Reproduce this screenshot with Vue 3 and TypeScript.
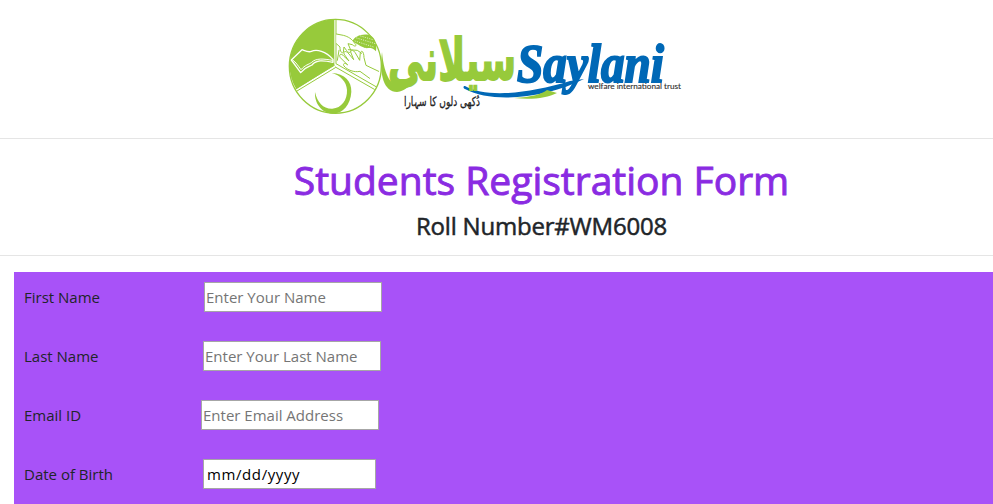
<script setup lang="ts">
interface Field {
  id: string
  label: string
  hint: string
}

const fields: Field[] = [
  { id: 'first-name', label: 'First Name', hint: 'Enter Your Name' },
  { id: 'last-name', label: 'Last Name', hint: 'Enter Your Last Name' },
  { id: 'email', label: 'Email ID', hint: 'Enter Email Address' },
  { id: 'birth-date', label: 'Date of Birth', hint: 'mm/dd/yyyy' },
]
</script>

<template>
  <div class="page">
    <header class="brand">
      <svg class="logo" width="410" height="110" viewBox="280 10 410 110" role="img" aria-label="Saylani">
        <!-- Emblem: book, hands with grain, crescent -->
        <g transform="translate(280 10) scale(.33333)" stroke-linejoin="round" stroke-linecap="round">
          <circle cx="166" cy="168" r="138" fill="#fff" />
          <path d="M163 166V28A138 138 0 0 0 49 238Z" fill="#97ca3b" />
          <ellipse cx="166" cy="169" rx="138" ry="141" fill="none" stroke="#97ca3b" stroke-width="4" />
          <path d="M168 28V161L288 230M166 173L51 243M163 166L47 236M166 171L283 238" fill="none" stroke="#97ca3b" stroke-width="3" />
          <path d="M34 150L66 119C79 124 86 128 94 124C110 117 137 123 159 148V157C127 150 109 150 96 165C87 170 76 170 62 188Z" fill="none" stroke="#fff" stroke-width="4" />
          <path d="M38 150C49 158 53 166 63 179C76 164 86 164 95 157C108 144 130 146 157 151" fill="none" stroke="#fff" stroke-width="3" />
          <path d="M155 189C195 190 215 215 214 245C212 285 188 311 158 311C125 309 103 280 105 246C112 278 130 297 157 296C185 294 202 270 201 240C200 215 180 195 155 189Z" fill="#97ca3b" />
          <path d="M218 94C222 79 247 70 267 75C283 80 292 98 288 124C271 107 263 119 250 112C240 108 231 103 218 94Z" fill="#97ca3b" />
          <path d="M225 93L284 112M230 84L286 101M242 78L282 90" fill="none" stroke="#fff" stroke-width="2" stroke-dasharray="1 6" />
          <g fill="#fff" stroke="#97ca3b" stroke-width="3">
            <path d="M169 72L190 76C205 80 215 86 225 101C232 107 225 112 217 104L204 101L213 122C212 130 203 128 200 122L192 111L190 127C184 132 179 120 180 111L169 101" />
            <path d="M269 205L240 184C222 188 202 180 192 168C187 160 196 157 203 165L181 143C175 133 184 128 192 139L207 153L192 132C190 122 199 122 207 132L221 149L212 126C213 116 222 121 228 132L239 151L241 128C247 117 252 130 252 143L258 166L296 184" />
            <path d="M177 121L172 151M205 119L232 121L245 130" fill="none" />
          </g>
        </g>

        <!-- Swooshes -->
        <path d="M382 52C379 75 384 92 397 92C405 91 411 86 412 78C405 89 386 95 382 52Z" fill="#97ca3b" />
        <path d="M465 86C486 98 527 94 570 81L584 79C546 98 493 104 465 89C463 88 463 86 465 86Z" fill="#0068b6" />
        <path d="M514 98C532 97 542 94 547 90L557 93C547 98 532 100 514 98Z" fill="#97ca3b" />

        <!-- Wordmarks -->
        <g transform="translate(388 80) scale(1 1.12)">
          <text class="urdu" x="0" y="0" textLength="128" lengthAdjust="spacingAndGlyphs" direction="ltr">سیلانی</text>
        </g>
        <text class="latin" x="517" y="82" textLength="147" lengthAdjust="spacingAndGlyphs">Saylani</text>
        <text class="tagline" x="588" y="89" textLength="93" lengthAdjust="spacingAndGlyphs">welfare international trust</text>
        <text class="motto" x="404" y="106" textLength="76" lengthAdjust="spacingAndGlyphs" direction="ltr">دُکھی دلوں کا سہارا</text>
      </svg>
    </header>

    <section class="titles">
      <h1>Students Registration Form</h1>
      <h4>Roll Number#WM6008</h4>
    </section>

    <form class="form">
      <div v-for="field in fields" :key="field.id" class="row" :class="field.id">
        <label :for="field.id"><span>{{ field.label }}</span></label>
        <input :id="field.id" type="text" :placeholder="field.hint" />
      </div>
    </form>
  </div>
</template>

<style>
body {
  background: #fff;
  overflow: hidden;
}
</style>

<style scoped>
.page {
  box-sizing: border-box;
  height: 504px;
  overflow: hidden;
  font-family: "Open Sans", "Noto Sans", sans-serif;
  color: #212529;
}
.brand {
  box-sizing: border-box;
  height: 139px;
  padding: 10px 0 0 280px;
  border-bottom: 1px solid #e5e5e5;
}
.logo {
  display: block;
}
.urdu {
  font: bold 52px "DejaVu Sans", sans-serif;
  fill: #97ca3b;
  stroke: #97ca3b;
  stroke-width: 1.6px;
}
.latin {
  font: italic bold 54px "Liberation Serif", serif;
  fill: #0068b6;
  stroke: #0068b6;
  stroke-width: 2px;
}
.tagline {
  font: 8px "Lato", sans-serif;
  fill: #333;
  stroke: #333;
  stroke-width: 0.15px;
}
.motto {
  font: 13px "DejaVu Sans", sans-serif;
  fill: #222;
  stroke: #222;
  stroke-width: 0.3px;
}
.titles {
  box-sizing: border-box;
  height: 117px;
  padding: 17px 0 0 90px;
  text-align: center;
  border-bottom: 1px solid #e5e5e5;
}
h1,
h4 {
  margin: 0;
  white-space: nowrap;
}
h1 {
  font-size: 39px;
  line-height: 48px;
  font-weight: 500;
  color: #8a2be2;
  -webkit-text-stroke: 0.9px #8a2be2;
}
h4 {
  margin-top: 7px;
  font-size: 24px;
  line-height: 30px;
  font-weight: 500;
  letter-spacing: -0.2px;
  -webkit-text-stroke: 0.5px #212529;
}
.form {
  height: 232px;
  box-sizing: border-box;
  margin: 16px 0 0 14px;
  padding: 10px 0 0 10px;
  background: #a852f8;
}
.row {
  display: flex;
  align-items: center;
  height: 30px;
  margin-bottom: 29px;
}
label {
  flex: none;
  width: 180px;
  font-size: 15px;
  line-height: 30px;
}
.last-name label,
.birth-date label {
  width: 179px;
}
.email label {
  width: 177px;
}
input {
  box-sizing: border-box;
  width: 178px;
  height: 30px;
  padding: 1px;
  border: 1px solid #a6a6a6;
  border-radius: 0;
  background: #fff;
  font: 15px "Open Sans", "Noto Sans", sans-serif;
  outline: none;
}
input::placeholder {
  color: #757575;
  opacity: 1;
}
.birth-date input {
  width: 173px;
  padding-left: 3px;
  letter-spacing: 0.6px;
}
.birth-date input::placeholder {
  color: #000;
}
</style>
